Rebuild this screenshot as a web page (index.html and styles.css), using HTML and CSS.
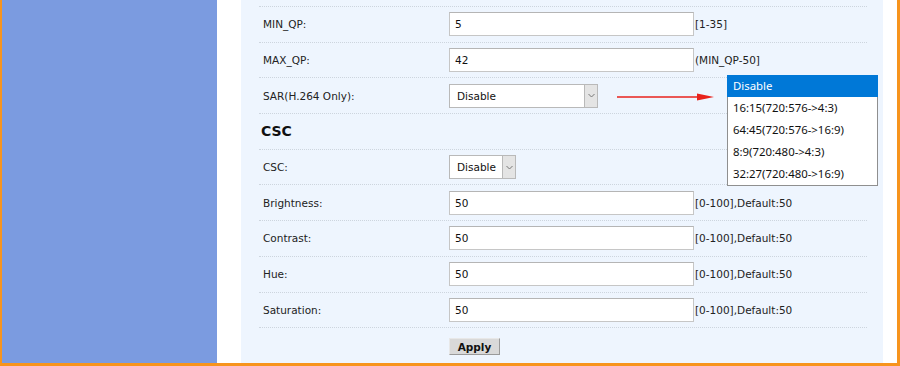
FILE: index.html
```html
<!DOCTYPE html>
<html lang="en">
<head>
  <meta charset="UTF-8" />
  <meta name="viewport" content="width=device-width, initial-scale=1.0"/>
  <title>Video Encoder Settings</title>
  <link rel="stylesheet" href="styles.css">
</head>
<body>
  <div class="frame">
    <aside class="sidebar"></aside>

    <main class="panel">
      <div class="row row-cut">
        <span class="label"></span>
        <input class="field" type="text" value="">
      </div>

      <div class="row">
        <label class="label">MIN_QP:</label>
        <input class="field" type="text" value="5">
        <span class="hint">[1-35]</span>
      </div>

      <div class="row">
        <label class="label">MAX_QP:</label>
        <input class="field" type="text" value="42">
        <span class="hint">(MIN_QP-50]</span>
      </div>

      <div class="row">
        <label class="label">SAR(H.264 Only):</label>
        <div class="select select-wide">
          <span class="select-text">Disable</span>
          <span class="select-btn">
            <svg width="7" height="5" viewBox="0 0 7 5"><path d="M0.5 1 L3.5 4 L6.5 1" fill="none" stroke="#777" stroke-width="1"/></svg>
          </span>
        </div>
      </div>

      <div class="row row-head">
        <h2>CSC</h2>
      </div>

      <div class="row">
        <label class="label">CSC:</label>
        <div class="select select-small">
          <span class="select-text">Disable</span>
          <span class="select-btn">
            <svg width="7" height="5" viewBox="0 0 7 5"><path d="M0.5 1 L3.5 4 L6.5 1" fill="none" stroke="#777" stroke-width="1"/></svg>
          </span>
        </div>
      </div>

      <div class="row">
        <label class="label">Brightness:</label>
        <input class="field" type="text" value="50">
        <span class="hint">[0-100],Default:50</span>
      </div>

      <div class="row">
        <label class="label">Contrast:</label>
        <input class="field" type="text" value="50">
        <span class="hint">[0-100],Default:50</span>
      </div>

      <div class="row">
        <label class="label">Hue:</label>
        <input class="field" type="text" value="50">
        <span class="hint">[0-100],Default:50</span>
      </div>

      <div class="row">
        <label class="label">Saturation:</label>
        <input class="field" type="text" value="50">
        <span class="hint">[0-100],Default:50</span>
      </div>

      <div class="row row-submit">
        <span class="label"></span>
        <button class="btn">Apply</button>
      </div>

      <!-- annotation: arrow pointing at the opened list -->
      <svg class="arrow" width="98" height="10" viewBox="0 0 98 10">
        <line x1="0" y1="5" x2="82" y2="5" stroke="#e8221c" stroke-width="1.6"/>
        <polygon points="80,1.5 97,5 80,8.5" fill="#e8221c"/>
      </svg>

      <ul class="dropdown">
        <li class="active">Disable</li>
        <li>16:15(720:576-&gt;4:3)</li>
        <li>64:45(720:576-&gt;16:9)</li>
        <li>8:9(720:480-&gt;4:3)</li>
        <li>32:27(720:480-&gt;16:9)</li>
      </ul>
    </main>
  </div>
</body>
</html>
```

FILE: styles.css
```css
body {
  margin: 0;
  padding: 0;
  font-family: 'DejaVu Sans', Verdana, sans-serif;
  font-size: 10.5px;
  color: #222;
  background: #fff;
}

.frame {
  display: flex;
  width: 900px;
  height: 366px;
  box-sizing: border-box;
  border-left: 2px solid #f7941d;
  border-right: 3px solid #f7941d;
  border-bottom: 3px solid #f7941d;
  background: #fff;
  overflow: hidden;
}

.sidebar {
  width: 215px;
  flex: none;
  background: #7b9be0;
}

.panel {
  position: relative;
  width: 642px;
  flex: none;
  margin-left: 24px;
  padding-left: 18px;
  box-sizing: border-box;
  background: #eef5fe;
  overflow: hidden;
}

.row {
  display: flex;
  align-items: center;
  width: 608px;
  height: 35.7px;
  box-sizing: border-box;
  border-top: 1px dotted #cdd5de;
}

.row-cut {
  border-top: none;
  margin-top: -29.7px;
}

.label {
  width: 186px;
  padding-left: 4px;
  flex: none;
}

.field {
  width: 245px;
  height: 24px;
  box-sizing: border-box;
  margin: 0;
  padding: 0 5px;
  border: 1px solid #c6c6c6;
  border-top-color: #b5b5b5;
  background: #fff;
  font-family: 'DejaVu Sans', Verdana, sans-serif;
  font-size: 10.5px;
  color: #111;
  outline: none;
}

.hint {
  margin-left: 1px;
  color: #222;
}

.select {
  display: flex;
  height: 24px;
  box-sizing: border-box;
  border: 1px solid #b9b9b9;
  background: #fff;
}

.select-wide {
  width: 149px;
}

.select-small {
  width: 67px;
}

.select-text {
  flex: 1;
  padding-left: 7px;
  line-height: 22px;
  color: #111;
}

.select-btn {
  width: 12px;
  display: flex;
  align-items: center;
  justify-content: center;
  border-left: 1px solid #b9b9b9;
  background: #e4e4e4;
}

.row-head h2 {
  margin: 0 0 0 2px;
  font-size: 14px;
  font-weight: bold;
  color: #111;
}

.row-submit {
  align-items: flex-start;
  padding-top: 10px;
}

.btn {
  height: 17px;
  width: 51px;
  padding: 0;
  margin: 0;
  border: 1px solid #9a9a9a;
  border-top-color: #e8e8e8;
  border-left-color: #e8e8e8;
  background: #d9d9d9;
  font-family: 'DejaVu Sans', Verdana, sans-serif;
  font-size: 10.5px;
  font-weight: bold;
  color: #111;
}

.arrow {
  position: absolute;
  left: 376px;
  top: 92px;
}

.dropdown {
  position: absolute;
  left: 486px;
  top: 75px;
  width: 151px;
  margin: 0;
  padding: 0;
  list-style: none;
  box-sizing: border-box;
  border: 1px solid #8f8f8f;
  border-top: none;
  background: #fff;
  font-family: 'Noto Sans', 'Open Sans', sans-serif;
  font-size: 11.4px;
  color: #111;
}

.dropdown li {
  height: 22px;
  line-height: 22px;
  padding-left: 5px;
}

.dropdown li.active {
  background: #0078d7;
  color: #fff;
  margin: 0 -1px;
  padding-left: 6px;
}
```
